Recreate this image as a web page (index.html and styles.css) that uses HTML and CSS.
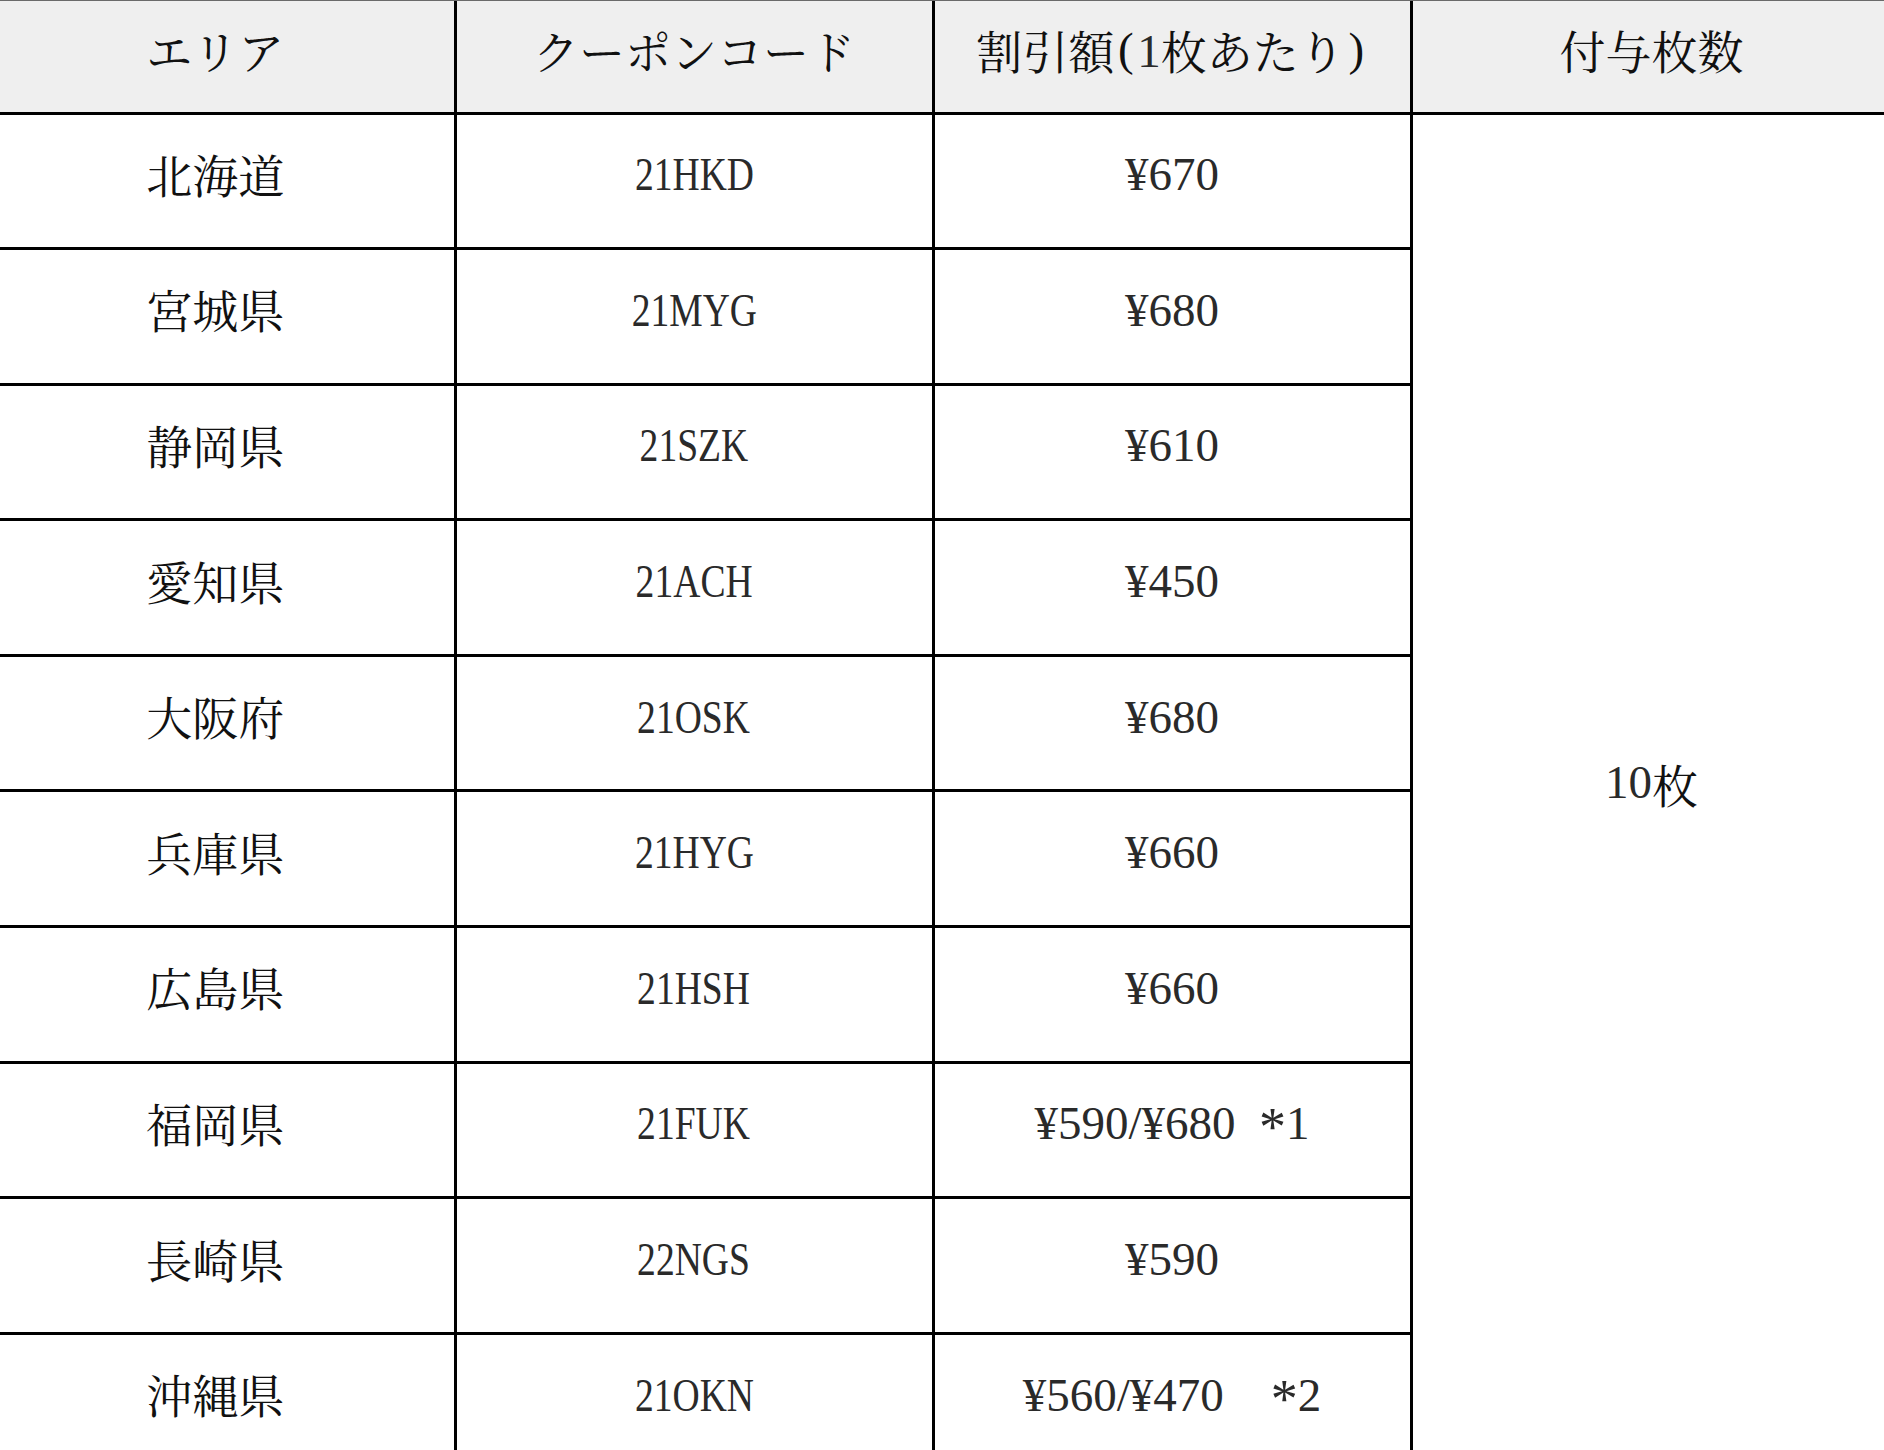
FILE: index.html
```html
<!DOCTYPE html>
<html lang="ja">
<head>
<meta charset="utf-8">
<title>クーポンコード一覧</title>
<link rel="stylesheet" href="styles.css">
</head>
<body>
<div class="frame">
  <div class="table">
    <div class="cell head">エリア</div>
    <div class="cell head">クーポンコード</div>
    <div class="cell head">割引額<span class="paren">(</span><span class="lat">1</span>枚あたり<span class="paren">)</span></div>
    <div class="cell head">付与枚数</div>

    <div class="cell count"><span class="lat">10</span>枚</div>

    <div class="cell">北海道</div>
    <div class="cell"><span class="code">21HKD</span></div>
    <div class="cell"><span class="lat">¥670</span></div>

    <div class="cell">宮城県</div>
    <div class="cell"><span class="code">21MYG</span></div>
    <div class="cell"><span class="lat">¥680</span></div>

    <div class="cell">静岡県</div>
    <div class="cell"><span class="code">21SZK</span></div>
    <div class="cell"><span class="lat">¥610</span></div>

    <div class="cell">愛知県</div>
    <div class="cell"><span class="code">21ACH</span></div>
    <div class="cell"><span class="lat">¥450</span></div>

    <div class="cell">大阪府</div>
    <div class="cell"><span class="code">21OSK</span></div>
    <div class="cell"><span class="lat">¥680</span></div>

    <div class="cell">兵庫県</div>
    <div class="cell"><span class="code">21HYG</span></div>
    <div class="cell"><span class="lat">¥660</span></div>

    <div class="cell">広島県</div>
    <div class="cell"><span class="code">21HSH</span></div>
    <div class="cell"><span class="lat">¥660</span></div>

    <div class="cell">福岡県</div>
    <div class="cell"><span class="code">21FUK</span></div>
    <div class="cell"><span class="lat">¥590/¥680  <span class="ast">*</span>1</span></div>

    <div class="cell">長崎県</div>
    <div class="cell"><span class="code">22NGS</span></div>
    <div class="cell"><span class="lat">¥590</span></div>

    <div class="cell">沖縄県</div>
    <div class="cell"><span class="code">21OKN</span></div>
    <div class="cell"><span class="lat">¥560/¥470    <span class="ast">*</span>2</span></div>
  </div>
</div>
</body>
</html>
```

FILE: styles.css
```css
html, body {
  margin: 0;
  padding: 0;
  overflow: hidden;
  background: #ffffff;
}

.frame {
  width: 1884px;
  height: 1450px;
  overflow: hidden;
}

.table {
  display: grid;
  grid-template-columns: 476.5px 475px 475px 478px;
  grid-template-rows: 110.5px repeat(10, 132.6px);
  gap: 3px;
  margin-left: -23px;
  width: max-content;
  background: #000000;
  border-top: 1px solid #6a6a6a;
  font-family: "Noto Serif CJK JP", "Noto Serif JP", "IPAMincho", "Liberation Serif", "Noto Sans CJK JP", serif;
  font-size: 46px;
  color: #111111;
}

.cell {
  background: #ffffff;
  display: flex;
  align-items: center;
  justify-content: center;
  padding-bottom: 16px;
  box-sizing: border-box;
  white-space: pre;
  line-height: 1;
}

.head {
  background: #efefef;
  padding-bottom: 14px;
}

.count {
  grid-column: 4;
  grid-row: 2 / span 10;
}

.lat {
  font-family: "Liberation Serif", serif;
  font-size: 47px;
  color: #2a2a2a;
  padding-top: 4px;
}

.count .lat {
  padding-top: 0;
}

.paren {
  display: inline-block;
  width: 23px;
  text-align: center;
  font-family: "Liberation Serif", serif;
  font-size: 47px;
}

.ast {
  font-size: 54px;
  line-height: 0;
  vertical-align: -0.12em;
}

.code {
  display: inline-block;
  font-family: "Liberation Serif", serif;
  font-size: 47px;
  color: #2a2a2a;
  padding-top: 4px;
  transform: scaleX(0.8);
}
```
